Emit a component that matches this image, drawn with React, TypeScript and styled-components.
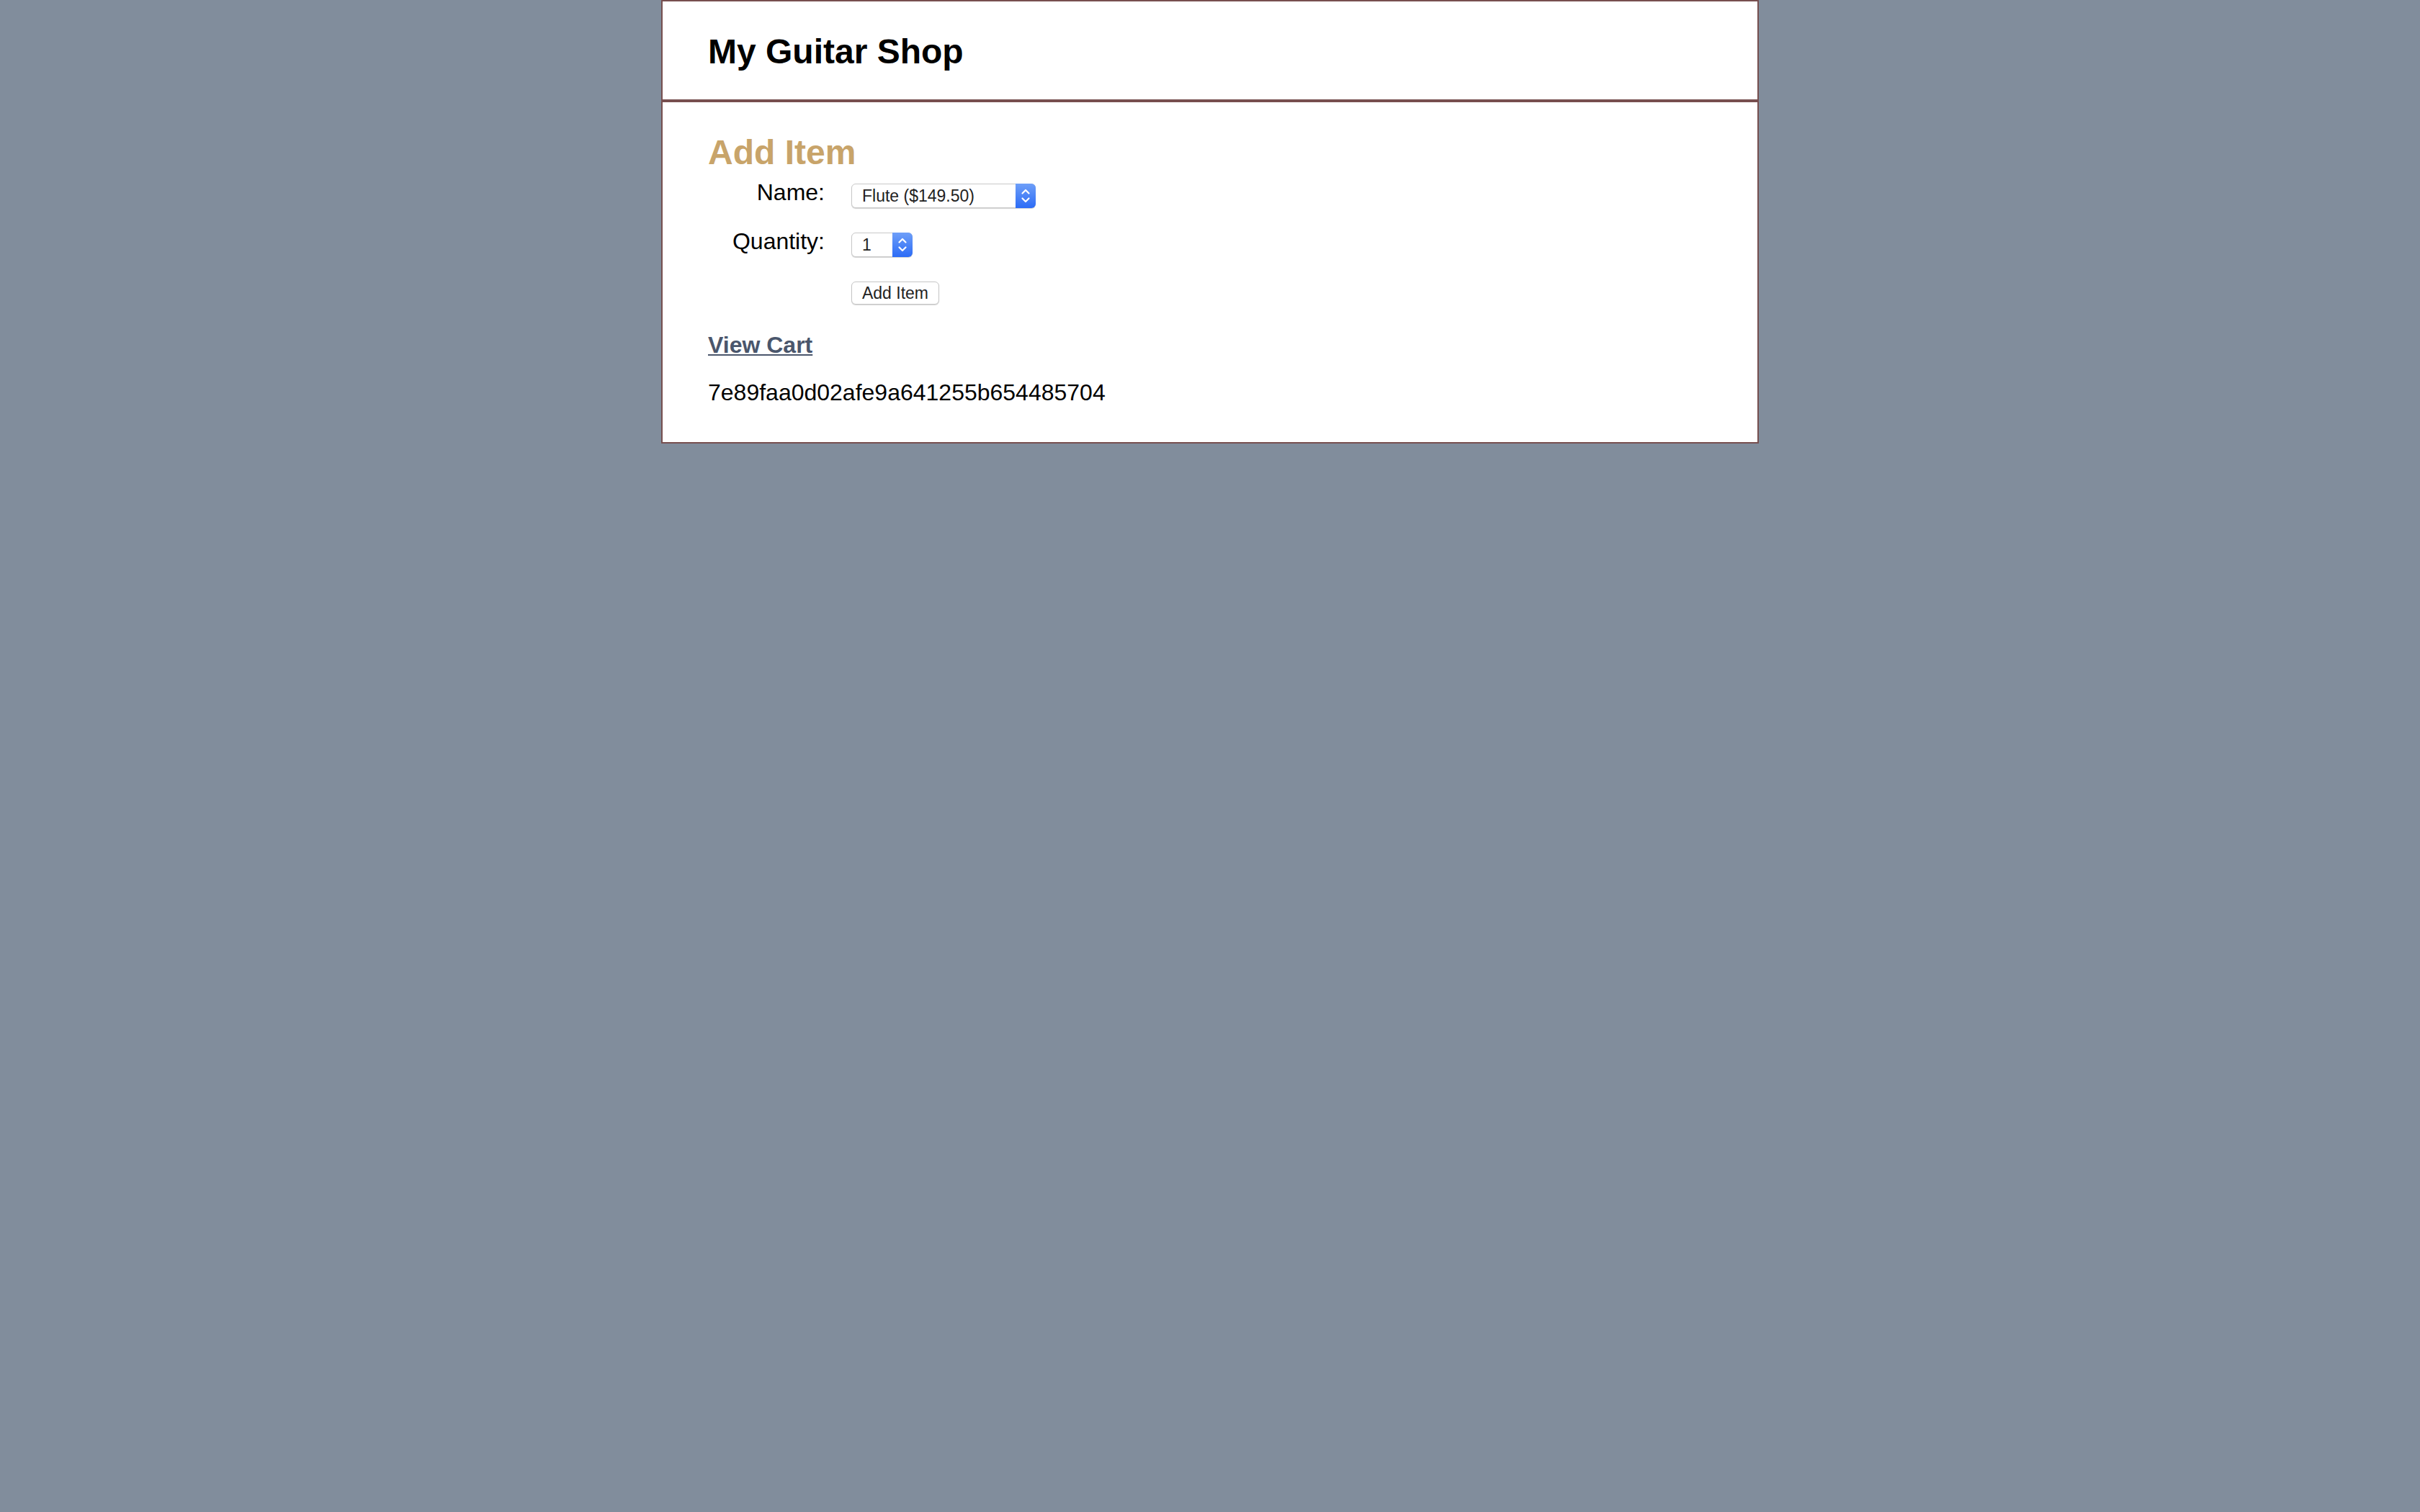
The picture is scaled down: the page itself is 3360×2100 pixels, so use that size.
import React from "react";
import styled, { createGlobalStyle } from "styled-components";

const GlobalStyle = createGlobalStyle`
  html, body {
    margin: 0;
    padding: 0;
    background: #818d9c;
  }
  body {
    font-family: "Liberation Sans", Arial, Helvetica, sans-serif;
    color: #000;
  }
`;

const Page = styled.div`
  width: 1520px;
  margin: 0 auto;
  background: #ffffff;
  border: 2px solid #774f4f;
`;

const Header = styled.header`
  padding: 42px 63px 39px;
  border-bottom: 4px solid #774f4f;
`;

const Title = styled.h1`
  margin: 0;
  font-size: 48px;
  line-height: 1.15;
  font-weight: 700;
  color: #000;
`;

const Main = styled.main`
  padding: 42px 63px 50px;
`;

const Heading = styled.h2`
  margin: 0 0 16px;
  font-size: 48px;
  line-height: 1.15;
  font-weight: 700;
  color: #c8a46a;
`;

const Form = styled.form`
  display: flex;
  flex-direction: column;
  gap: 34px;
  margin: 0;
`;

const FormRow = styled.div`
  display: flex;
  align-items: flex-start;
  height: 34px;
`;

const ButtonRow = styled.div`
  display: flex;
  padding-left: 199px;
`;

const Label = styled.label`
  width: 162px;
  margin-right: 37px;
  text-align: right;
  font-size: 32px;
  line-height: 25px;
  white-space: nowrap;
`;

const SelectShell = styled.span<{ $width: number }>`
  position: relative;
  display: inline-flex;
  width: ${(p) => p.$width}px;
  height: 34px;
`;

const Select = styled.select`
  appearance: none;
  -webkit-appearance: none;
  width: 100%;
  height: 34px;
  margin: 0;
  padding: 0 30px 0 14px;
  border: 1px solid #c9c9c9;
  border-radius: 6px;
  background: #ffffff;
  box-shadow: 0 1px 1px rgba(0, 0, 0, 0.18);
  font-family: "Liberation Sans", Arial, Helvetica, sans-serif;
  font-size: 23px;
  color: #222;
  outline: none;
`;

const ArrowCap = styled.span`
  position: absolute;
  top: 0;
  right: 0;
  width: 28px;
  height: 34px;
  border-radius: 0 6px 6px 0;
  background: linear-gradient(#6e9ff8, #2c6cf6);
  display: flex;
  align-items: center;
  justify-content: center;
  pointer-events: none;
`;

const Button = styled.button`
  width: 122px;
  height: 32px;
  padding: 0;
  border: 1px solid #c6c6c6;
  border-radius: 6px;
  background: #ffffff;
  box-shadow: 0 1px 1px rgba(0, 0, 0, 0.16);
  font-family: "Liberation Sans", Arial, Helvetica, sans-serif;
  font-size: 23px;
  color: #222;
`;

const CartLink = styled.a`
  display: block;
  margin-top: 38px;
  font-size: 32px;
  line-height: 1.15;
  font-weight: 700;
  color: #4a566c;
  text-decoration: underline;
  text-decoration-thickness: 2px;
  text-underline-offset: 2px;
`;

const Token = styled.p`
  margin: 29px 0 0;
  font-size: 32px;
  line-height: 1.15;
`;

const Chevrons = () => (
  <svg width="14" height="22" viewBox="0 0 14 22" fill="none">
    <path d="M2.5 7.5 L7 3 L11.5 7.5" stroke="#fff" strokeWidth="2.2" strokeLinecap="round" strokeLinejoin="round" />
    <path d="M2.5 14.5 L7 19 L11.5 14.5" stroke="#fff" strokeWidth="2.2" strokeLinecap="round" strokeLinejoin="round" />
  </svg>
);

export default function App() {
  return (
    <>
      <GlobalStyle />
      <Page>
        <Header>
          <Title>My Guitar Shop</Title>
        </Header>
        <Main>
          <Heading>Add Item</Heading>
          <Form onSubmit={(e) => e.preventDefault()}>
            <FormRow>
              <Label htmlFor="name">Name:</Label>
              <SelectShell $width={256}>
                <Select id="name" defaultValue="flute">
                  <option value="flute">Flute ($149.50)</option>
                  <option value="guitar">Guitar ($149.50)</option>
                  <option value="trumpet">Trumpet ($199.50)</option>
                </Select>
                <ArrowCap>
                  <Chevrons />
                </ArrowCap>
              </SelectShell>
            </FormRow>
            <FormRow>
              <Label htmlFor="qty">Quantity:</Label>
              <SelectShell $width={85}>
                <Select id="qty" defaultValue="1">
                  <option value="1">1</option>
                  <option value="2">2</option>
                  <option value="3">3</option>
                </Select>
                <ArrowCap>
                  <Chevrons />
                </ArrowCap>
              </SelectShell>
            </FormRow>
            <ButtonRow>
              <Button type="submit">Add Item</Button>
            </ButtonRow>
          </Form>
          <CartLink href="#">View Cart</CartLink>
          <Token>7e89faa0d02afe9a641255b654485704</Token>
        </Main>
      </Page>
    </>
  );
}
